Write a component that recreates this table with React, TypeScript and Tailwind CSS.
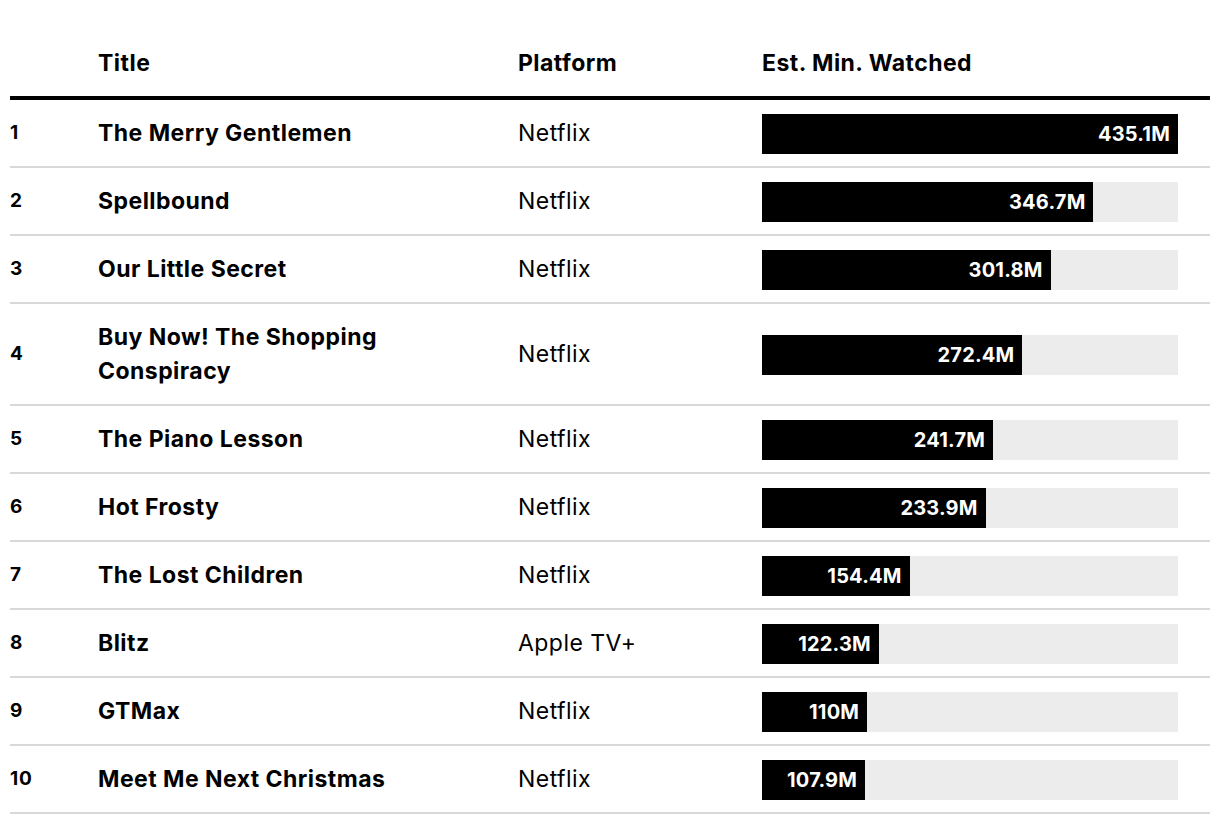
const rows = [
  { rank: 1, title: "The Merry Gentlemen", platform: "Netflix", value: 435.1, label: "435.1M" },
  { rank: 2, title: "Spellbound", platform: "Netflix", value: 346.7, label: "346.7M" },
  { rank: 3, title: "Our Little Secret", platform: "Netflix", value: 301.8, label: "301.8M" },
  { rank: 4, title: "Buy Now! The Shopping Conspiracy", platform: "Netflix", value: 272.4, label: "272.4M" },
  { rank: 5, title: "The Piano Lesson", platform: "Netflix", value: 241.7, label: "241.7M" },
  { rank: 6, title: "Hot Frosty", platform: "Netflix", value: 233.9, label: "233.9M" },
  { rank: 7, title: "The Lost Children", platform: "Netflix", value: 154.4, label: "154.4M" },
  { rank: 8, title: "Blitz", platform: "Apple TV+", value: 122.3, label: "122.3M" },
  { rank: 9, title: "GTMax", platform: "Netflix", value: 110, label: "110M" },
  { rank: 10, title: "Meet Me Next Christmas", platform: "Netflix", value: 107.9, label: "107.9M" },
];

const max = 435.1;

export default function App() {
  return (
    <div className="min-h-screen bg-white text-black font-['Inter',sans-serif]">
      <div className="ml-[10px] w-[1200px]">
        {/* header */}
        <div className="grid grid-cols-[88px_420px_244px_448px] h-[100px] items-end pb-4 border-b-4 border-black text-[23px] leading-[34px] font-bold tracking-[0.02em]">
          <div />
          <div>Title</div>
          <div>Platform</div>
          <div>Est. Min. Watched</div>
        </div>

        {rows.map((r) => (
          <div
            key={r.rank}
            className="grid grid-cols-[88px_420px_244px_448px] items-center py-4 border-b-2 border-[#d9d9d9]"
          >
            <div className="text-[19px] font-bold leading-[34px] tracking-[0.04em]">{r.rank}</div>
            <div className="pr-10 text-[23px] font-bold leading-[34px] tracking-[0.02em]">{r.title}</div>
            <div className="text-[23px] leading-[34px] tracking-[0.02em]">{r.platform}</div>
            <div className="w-[416px] h-10 -mt-[2px] -mb-[4px] bg-[#ececec] flex">
              <div
                className="h-full bg-black flex items-center justify-end pr-2 text-white text-[20px] font-bold tracking-[0.01em]"
                style={{ width: `${(r.value / max) * 100}%` }}
              >
                {r.label}
              </div>
            </div>
          </div>
        ))}
      </div>
    </div>
  );
}
